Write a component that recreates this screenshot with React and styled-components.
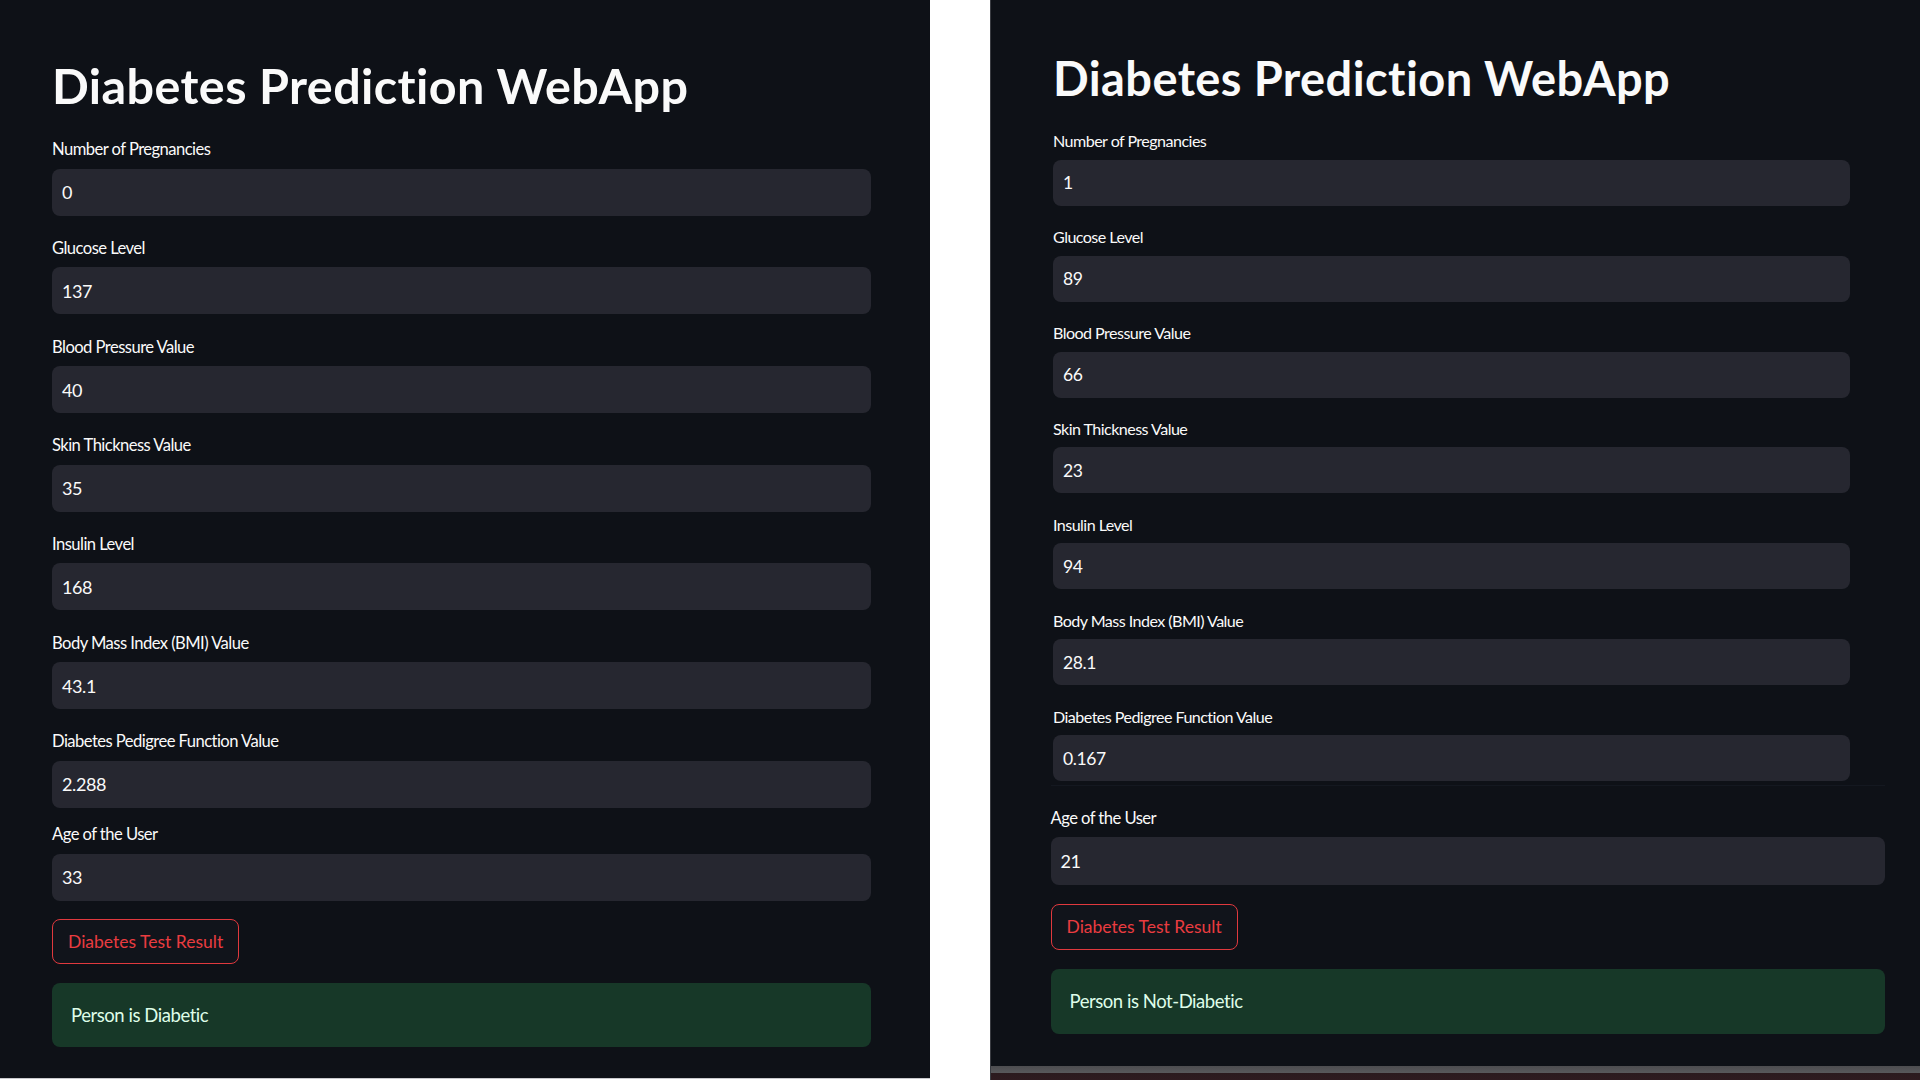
import React from 'react';
import styled, { createGlobalStyle } from 'styled-components';

const GlobalStyle = createGlobalStyle`
  html, body {
    margin: 0;
    padding: 0;
    background: #ffffff;
  }
  body {
    font-family: Lato, "Noto Sans", sans-serif;
    -webkit-font-smoothing: antialiased;
  }
  * { box-sizing: border-box; }
`;

const Screen = styled.div`
  display: flex;
  align-items: flex-start;
  gap: 60px;
  width: 1920px;
  height: 1080px;
  background: #ffffff;
  overflow: hidden;
`;

const LeftPanel = styled.section`
  width: 930px;
  height: 1079px;
  background: #0e1117;
  border-bottom: 1px solid #c9cacd;
  padding: 56px 59px 0 52px;
`;

const RightPanel = styled.section`
  display: flex;
  flex-direction: column;
  width: 930px;
  height: 1080px;
  background: #0e1117;
  border-left: 1px solid #3a3c42;
`;

const RightSheet = styled.div`
  flex: 1;
  padding: 50px 0 0 62px;
`;

const TopBlock = styled.div`
  width: 797px;
`;

const LowerBlock = styled.div`
  width: 834px;
  margin: 4px 0 0 -2.5px;
  padding-top: 23px;
  border-top: 1px solid #141820;
`;

const Title = styled.h1`
  margin: 0 0 ${p => p.$after}px;
  font-family: Lato, "Noto Sans", sans-serif;
  font-weight: 700;
  font-size: ${p => p.$size}px;
  line-height: 1.2;
  letter-spacing: 0.4px;
  color: #fafafa;
`;

const Form = styled.div`
  display: flex;
  flex-direction: column;
  gap: ${p => p.$gap}px;
`;

const Field = styled.div`
  display: flex;
  flex-direction: column;
  gap: ${p => p.$gap}px;
  margin-top: ${p => p.$top || 0}px;
`;

const Label = styled.label`
  font-size: ${p => p.$size}px;
  line-height: 1.2;
  color: #fafafa;
  letter-spacing: -0.55px;
`;

const InputBox = styled.div`
  display: flex;
  align-items: center;
  height: ${p => p.$h}px;
  padding-left: 10px;
  background: #262730;
  border-radius: 8px;
  font-size: ${p => p.$font}px;
  color: #fafafa;
  letter-spacing: -0.4px;
`;

const TestButton = styled.button`
  align-self: flex-start;
  height: ${p => p.$h}px;
  margin-top: ${p => p.$top}px;
  padding: 0 15px;
  background: #11141b;
  border: 1px solid #e0393e;
  border-radius: 8px;
  color: #ea3c40;
  font-family: Lato, "Noto Sans", sans-serif;
  font-size: 17.5px;
  letter-spacing: 0;
  cursor: pointer;
`;

const Result = styled.div`
  display: flex;
  align-items: center;
  height: ${p => p.$h}px;
  margin-top: ${p => p.$top}px;
  padding-left: 19px;
  background: #173828;
  border-radius: 8px;
  color: #dffde9;
  font-size: 18.5px;
  letter-spacing: -0.45px;
`;

const Column = styled.div`
  display: flex;
  flex-direction: column;
`;

const Taskbar = styled.div`
  height: 14px;
  background: linear-gradient(#4d4d50 0, #58585b 7px, #2b1a1e 7px, #2e1b20 14px);
`;

const leftFields = [
  ['Number of Pregnancies', '0'],
  ['Glucose Level', '137'],
  ['Blood Pressure Value', '40'],
  ['Skin Thickness Value', '35'],
  ['Insulin Level', '168'],
  ['Body Mass Index (BMI) Value', '43.1'],
  ['Diabetes Pedigree Function Value', '2.288'],
];

const rightFields = [
  ['Number of Pregnancies', '1'],
  ['Glucose Level', '89'],
  ['Blood Pressure Value', '66'],
  ['Skin Thickness Value', '23'],
  ['Insulin Level', '94'],
  ['Body Mass Index (BMI) Value', '28.1'],
  ['Diabetes Pedigree Function Value', '0.167'],
];

const NumberField = ({ label, value, labelSize, gap, h, font, top }) => (
  <Field $gap={gap} $top={top}>
    <Label $size={labelSize}>{label}</Label>
    <InputBox $h={h} $font={font}>{value}</InputBox>
  </Field>
);

const App = () => (
  <>
    <GlobalStyle />
    <Screen>
      <LeftPanel>
        <Title $size={48.5} $after={26}>Diabetes Prediction WebApp</Title>
        <Form $gap={23.3}>
          {leftFields.map(([l, v]) => (
            <NumberField key={l} label={l} value={v} labelSize={16.6} gap={8.5} h={47} font={18} />
          ))}
        </Form>
        <Column>
          <NumberField label="Age of the User" value="33" labelSize={16.6} gap={8.5} h={47} font={18} top={17.5} />
          <TestButton $h={45} $top={18.5}>Diabetes Test Result</TestButton>
          <Result $h={64} $top={18.5}>Person is Diabetic</Result>
        </Column>
      </LeftPanel>

      <RightPanel>
        <RightSheet>
          <TopBlock>
            <Title $size={47} $after={25}>Diabetes Prediction WebApp</Title>
            <Form $gap={21.6}>
              {rightFields.map(([l, v]) => (
                <NumberField key={l} label={l} value={v} labelSize={16.1} gap={9} h={46} font={17.5} />
              ))}
            </Form>
          </TopBlock>
          <LowerBlock>
            <Column>
              <NumberField label="Age of the User" value="21" labelSize={16.6} gap={7.5} h={48} font={18} />
              <TestButton $h={46} $top={19}>Diabetes Test Result</TestButton>
              <Result $h={65} $top={19}>Person is Not-Diabetic</Result>
            </Column>
          </LowerBlock>
        </RightSheet>
        <Taskbar />
      </RightPanel>
    </Screen>
  </>
);

export default App;
